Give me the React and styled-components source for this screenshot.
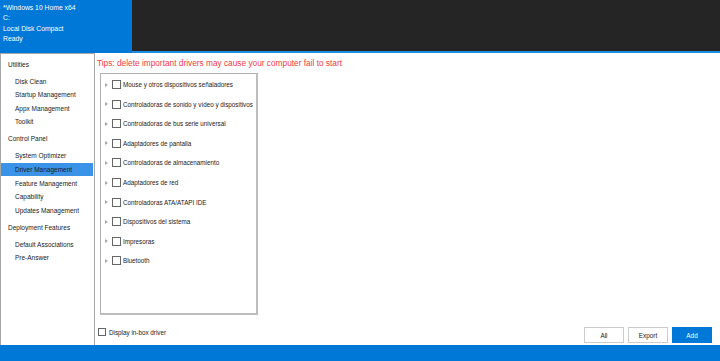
import React from "react";
import styled, { createGlobalStyle } from "styled-components";

const Global = createGlobalStyle`
  html, body { margin: 0; padding: 0; background: #ffffff; }
  body { font-family: "Liberation Sans", Arial, sans-serif; }
  * { box-sizing: border-box; }
`;

const Page = styled.div`
  width: 720px;
  height: 361px;
  display: flex;
  flex-direction: column;
  overflow: hidden;
`;

const Header = styled.header`
  height: 53px;
  display: flex;
`;

const InfoPanel = styled.div`
  width: 132px;
  background: #0078d7;
  color: #ffffff;
  padding: 3px 0 0 3px;
  font-size: 6.8px;
  line-height: 10.3px;
`;

const DarkArea = styled.div`
  flex: 1;
  background: #252525;
  border-bottom: 2px solid #1c8ce3;
`;

const Body = styled.div`
  flex: 1;
  display: flex;
  min-height: 0;
`;

const Sidebar = styled.nav`
  width: 95px;
  border: 1px solid #a6a6a6;
  border-bottom: none;
  background: #ffffff;
  display: flex;
  flex-direction: column;
  color: #1a1a1a;
  font-size: 6.5px;
`;

const GroupTitle = styled.div`
  height: 20.4px;
  display: flex;
  align-items: center;
  padding-left: 7px;
`;

const NavItem = styled.div`
  height: 13.6px;
  display: flex;
  align-items: center;
  padding-left: 14px;
  margin: 0 1px 0 0;
  background: ${(p) => (p.$active ? "#3a93e6" : "transparent")};
`;

const Main = styled.main`
  flex: 1;
  display: flex;
  flex-direction: column;
  padding: 0 8px 2px 2px;
`;

const Tips = styled.div`
  height: 20px;
  display: flex;
  align-items: center;
  color: #ee3a3f;
  font-size: 8.3px;
`;

const TreeBox = styled.div`
  width: 158px;
  height: 242px;
  margin-left: 3px;
  border: 1px solid #b0b0b0;
  border-right: 2px solid #bdbdbd;
  border-bottom: 2px solid #bdbdbd;
  display: flex;
  flex-direction: column;
  padding-top: 1px;
`;

const TreeRow = styled.div`
  height: 19.55px;
  display: flex;
  align-items: center;
  padding-left: 4px;
  font-size: 6.3px;
  color: #1a1a1a;
  white-space: nowrap;
`;

const Arrow = styled.span`
  width: 0;
  height: 0;
  border-top: 2.5px solid transparent;
  border-bottom: 2.5px solid transparent;
  border-left: 3px solid #a8a8a8;
  margin-right: 4px;
`;

const Box = styled.span`
  width: ${(p) => p.$size || 9}px;
  height: ${(p) => p.$size || 9}px;
  border: 1px solid #666666;
  background: #fff;
  margin-right: ${(p) => p.$gap || 2}px;
  flex-shrink: 0;
`;

const FooterRow = styled.div`
  flex: 1;
  display: flex;
  align-items: flex-end;
  justify-content: space-between;
`;

const InboxToggle = styled.label`
  display: flex;
  align-items: center;
  font-size: 6.3px;
  color: #1a1a1a;
  margin-bottom: 7px;
  padding-left: 1px;
`;

const Buttons = styled.div`
  display: flex;
  gap: 4px;
`;

const Button = styled.button`
  width: 40px;
  height: 16px;
  padding: 0;
  font-family: inherit;
  font-size: 6.4px;
  border: 1px solid ${(p) => (p.$primary ? "#0078d7" : "#cccccc")};
  background: ${(p) => (p.$primary ? "#0078d7" : "#ffffff")};
  color: ${(p) => (p.$primary ? "#ffffff" : "#1a1a1a")};
`;

const StatusBar = styled.footer`
  height: 16px;
  background: #0078d7;
`;

const groups = [
  { title: "Utilities", items: ["Disk Clean", "Startup Management", "Appx Management", "Toolkit"] },
  {
    title: "Control Panel",
    items: ["System Optimizer", "Driver Management", "Feature Management", "Capability", "Updates Management"],
  },
  { title: "Deployment Features", items: ["Default Associations", "Pre-Answer"] },
];

const drivers = [
  "Mouse y otros dispositivos señaladores",
  "Controladoras de sonido y vídeo y dispositivos",
  "Controladoras de bus serie universal",
  "Adaptadores de pantalla",
  "Controladoras de almacenamiento",
  "Adaptadores de red",
  "Controladoras ATA/ATAPI IDE",
  "Dispositivos del sistema",
  "Impresoras",
  "Bluetooth",
];

export default function App() {
  return (
    <Page>
      <Global />
      <Header>
        <InfoPanel>
          <div>*Windows 10 Home x64</div>
          <div>C:</div>
          <div>Local Disk Compact</div>
          <div>Ready</div>
        </InfoPanel>
        <DarkArea />
      </Header>
      <Body>
        <Sidebar>
          {groups.map((g) => (
            <React.Fragment key={g.title}>
              <GroupTitle>{g.title}</GroupTitle>
              {g.items.map((it) => (
                <NavItem key={it} $active={it === "Driver Management"}>
                  {it}
                </NavItem>
              ))}
            </React.Fragment>
          ))}
        </Sidebar>
        <Main>
          <Tips>Tips: delete important drivers may cause your computer fail to start</Tips>
          <TreeBox>
            {drivers.map((d) => (
              <TreeRow key={d}>
                <Arrow />
                <Box />
                {d}
              </TreeRow>
            ))}
          </TreeBox>
          <FooterRow>
            <InboxToggle>
              <Box $size={8} $gap={3} />
              Display in-box driver
            </InboxToggle>
            <Buttons>
              <Button>All</Button>
              <Button>Export</Button>
              <Button $primary>Add</Button>
            </Buttons>
          </FooterRow>
        </Main>
      </Body>
      <StatusBar />
    </Page>
  );
}
